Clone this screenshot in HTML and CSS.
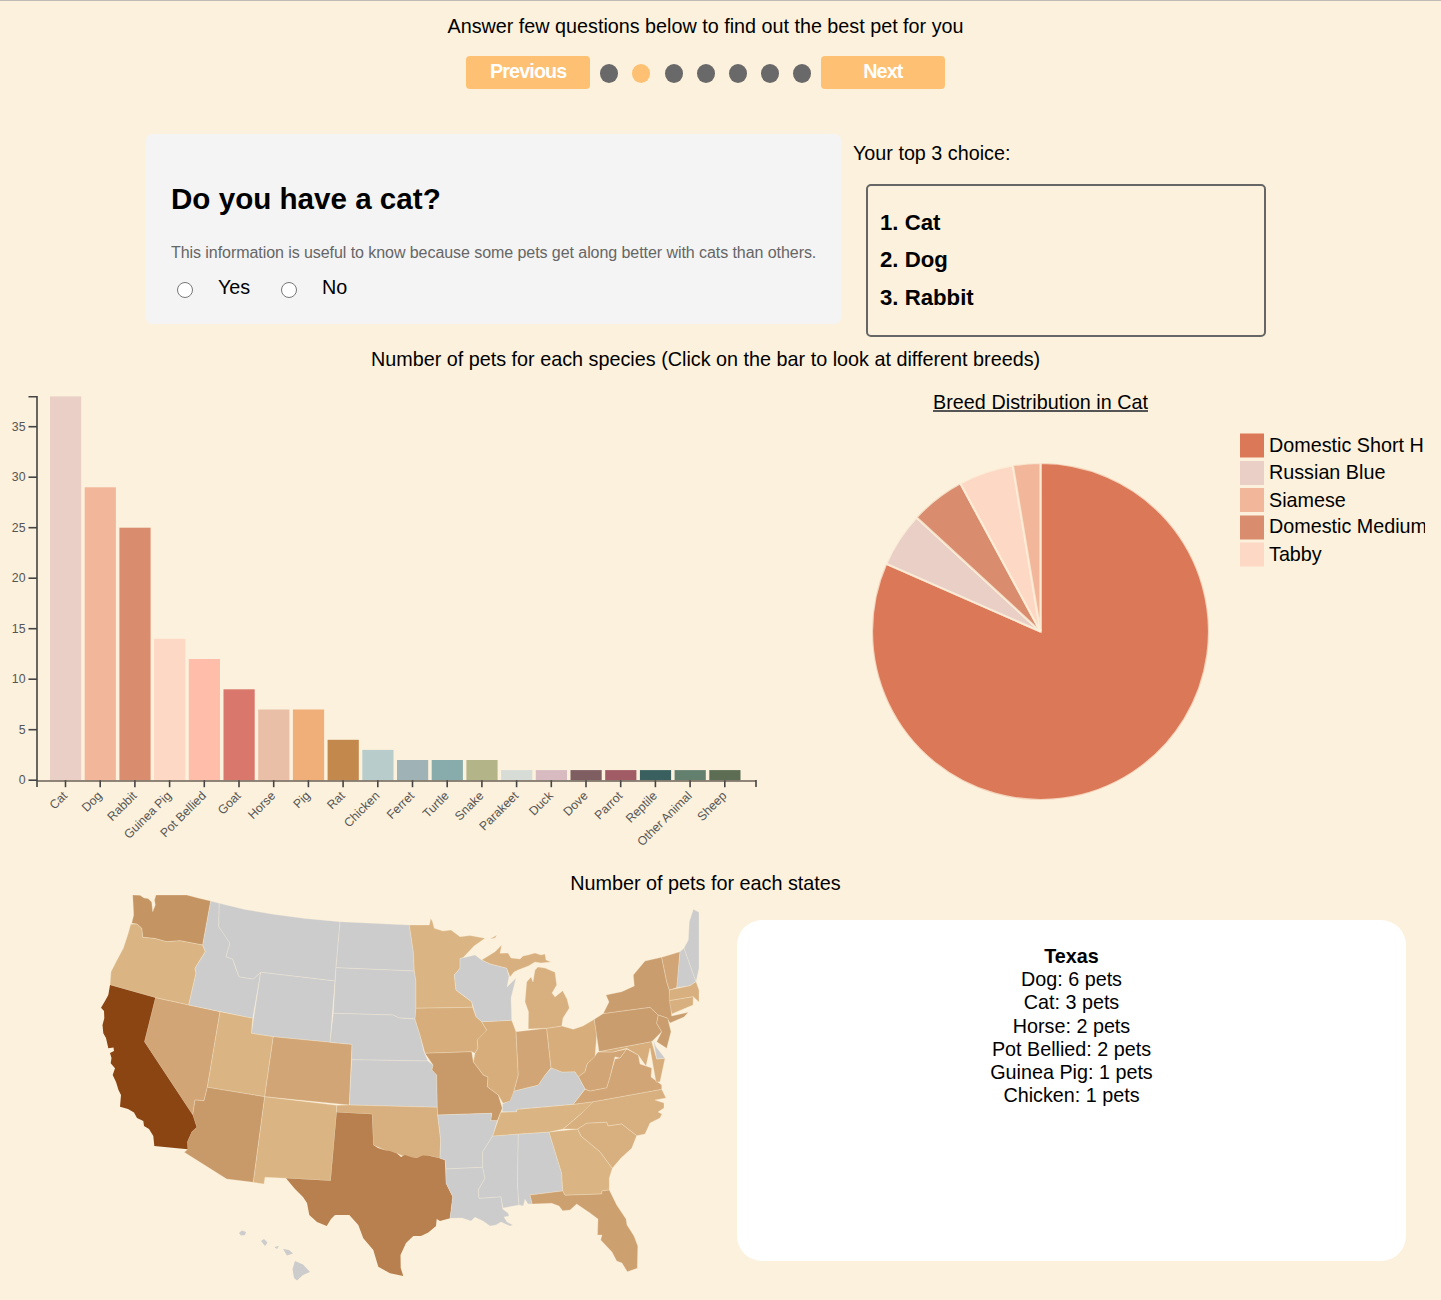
FILE: index.html
```
<!DOCTYPE html>
<html lang="en">
<head>
<meta charset="utf-8">
<title>Find the best pet for you</title>
<link rel="stylesheet" href="styles.css">
</head>
<body>
<main class="page">
  <p class="intro">Answer few questions below to find out the best pet for you</p>
  <nav class="pager">
    <button class="pager-btn" type="button">Previous</button>
    <ol class="dots"><li></li><li class="active"></li><li></li><li></li><li></li><li></li><li></li></ol>
    <button class="pager-btn" type="button">Next</button>
  </nav>

  <section class="quiz">
    <form class="question">
      <h1>Do you have a cat?</h1>
      <p class="hint">This information is useful to know because some pets get along better with cats than others.</p>
      <div class="answers">
        <label><input type="radio" name="cat">Yes</label>
        <label><input type="radio" name="cat">No</label>
      </div>
    </form>
    <aside class="result">
      <p>Your top 3 choice:</p>
      <div class="ranking"><div>1. Cat</div><div>2. Dog</div><div>3. Rabbit</div></div>
    </aside>
  </section>

  <h2 class="section-title">Number of pets for each species (Click on the bar to look at different breeds)</h2>
  <section class="charts">
    <svg class="bar-chart" id="bars" viewBox="0 380 800 480"></svg>
    <svg class="pie-chart" viewBox="840 380 585 440">
      <text class="pie-title" x="933" y="409" textLength="215">Breed Distribution in Cat</text>
      <rect x="933" y="410" width="215" height="2" fill="#555"/>
      <g class="slices">
        <path fill="#db7857" d="M1040.5 631.500V463A168.5 168.5 0 1 1 886.2 563.8Z"/>
        <path fill="#e9cfc5" d="M1040.5 631.500L886.2 563.8A168.5 168.5 0 0 1 916.5 517.4Z"/>
        <path fill="#d98d6e" d="M1040.5 631.500L916.5 517.4A168.5 168.5 0 0 1 960.3 483.3Z"/>
        <path fill="#fdd8c4" d="M1040.5 631.500L960.3 483.3A168.5 168.5 0 0 1 1012.8 465.3Z"/>
        <path fill="#f2b79b" d="M1040.5 631.500L1012.8 465.3A168.5 168.5 0 0 1 1040.5 463Z"/>
      </g>
      <g class="legend">
        <rect x="1240" y="433.500" width="24" height="24" fill="#db7857"/><text x="1269" y="452">Domestic Short H</text>
        <rect x="1240" y="461" width="24" height="24" fill="#e9cfc5"/><text x="1269" y="478.500">Russian Blue</text>
        <rect x="1240" y="488" width="24" height="24" fill="#f2b79b"/><text x="1269" y="506.500">Siamese</text>
        <rect x="1240" y="515.5" width="24" height="24" fill="#d98d6e"/><text x="1269" y="533">Domestic Medium</text>
        <rect x="1240" y="542.500" width="24" height="24" fill="#fdd8c4"/><text x="1269" y="561">Tabby</text>
      </g>
    </svg>
  </section>

  <h2 class="section-title">Number of pets for each states</h2>
  <section class="states">
    <svg class="map" viewBox="0 895 699 390">
      <path class="s9" d="M132.7 895L140 895.3 144 898 148 898.500 151.700 902 152.700 911.700 155.300 905 154.500 900 156 895 186.700 895 198 898 210.700 901 202.700 945 192 943 180 940.700 166.700 941.700 155 938.500 142.700 937.300 141.700 928.300 137 924 131.700 923.300 133.700 915Z"/>
      <path class="s1" d="M130.700 924.300L137 924 141.700 928.300 142.700 937.300 155 938.500 166.700 941.700 180 940.700 192 943 202.700 945 205.300 951.700 200 960 195 968.300 196 973.300 188.700 1005 155.300 997.700 110 985 111 971.700 117 960 123.300 948.300 128 934Z"/>
      <path class="s5" d="M155.300 997.700L144.300 1041.700 192.700 1115 195 1100 204 1100.700 207.300 1087.300 220 1011.700 188.700 1005Z"/>
      <path class="s0" d="M210.700 901L219.300 903.300 218.700 926.700 224 934 230 943.300 226 956.700 232.700 959 236 969 239 976.700 253.300 979 260.700 972.300 252.700 1018.300 188.700 1005 196 973.300 195 968.300 205.300 951.700 202.700 945Z"/>
      <path class="s0" d="M219.300 903.300L245 909.500 273.300 914.300 305 918.500 340 921.700 336 967.700 335 981 260.700 972.300 253.300 979 239 976.700 232.700 959 226 956.700 230 943.300 218.700 926.700Z"/>
      <path class="s0" d="M260.700 972.300L335 981 330 1042.300 273.300 1036.700 251.300 1033.300Z"/>
      <path class="s1" d="M220 1011.700L252.700 1018.300 251.300 1033.300 273.300 1036.700 264.700 1096.700 207.300 1087.300Z"/>
      <path class="s5" d="M273.300 1036.700L330 1042.300 352 1044.300 349.300 1105 264.700 1096.700Z"/>
      <path class="s8" d="M207.300 1087.300L264.700 1096.700 253.300 1182.300 226.700 1179 184.300 1152.300 187.700 1149.300 187.300 1141.700 191.700 1131.700 196.700 1127.300 192.700 1115 195 1100 204 1100.700Z"/>
      <path class="s12" d="M110 985L108.300 995 105 1001 101 1007.700 104 1011 104.300 1018.300 102.500 1025 103.300 1033.300 106 1038 108.300 1048.300 113.500 1047.500 114 1051 110 1053 111.500 1058 110.700 1063.300 115 1068.300 112.700 1075 116 1082 118.500 1090 121 1095 120 1106.700 128 1109 134 1112.500 137 1118 143.300 1121 144 1126 149 1129 153.300 1136 154.300 1146 187.700 1149.300 187.300 1141.700 191.700 1131.700 196.700 1127.300 192.700 1115 144.300 1041.700 155.300 997.700Z"/>
      <path class="s1" d="M264.700 1096.700L336.700 1105.300 336.700 1112.300 330.700 1180.700 286 1178.300 265 1177.300 264 1184 253.300 1182.300Z"/>
      <path class="s0" d="M340 921.700L409.300 925 413.300 951.700 414.300 971 336 967.700Z"/>
      <path class="s0" d="M336 967.700L414.300 971 416 981.700 416 1008.300 415 1019 406.700 1018.300 399 1018 393.300 1015 333.300 1013.300Z"/>
      <path class="s0" d="M333.300 1013.300L393.300 1015 399 1018 415 1019 420 1035 424 1051.700 428 1061 351.700 1059.700 352 1044.300 330 1042.300Z"/>
      <path class="s0" d="M351.700 1059.700L428 1061 433 1065 432 1070 436.700 1075 437.300 1107.300 349.300 1105Z"/>
      <path class="s2" d="M336.700 1105.300L349.300 1105 437.300 1107.300 437.700 1115 440.700 1140 440 1158.300 430 1156 416.700 1158 405 1157 396.700 1153.300 384 1150 373.300 1145 372 1114.300 336.700 1112.300Z"/>
      <path class="s11" d="M336.700 1112.300L372 1114.300 373.300 1145 378 1148 384 1150 390 1151 396.700 1153.300 401 1157 405 1155 411 1157 416.700 1158 423 1155.500 430 1156 440 1158.300 445 1160 446 1183.300 452.700 1196.700 450 1218.300 440 1221 436.700 1219 436 1226 428.300 1232.500 421 1236 413.300 1236 406 1243 400.500 1255 400.700 1268 403.300 1276 390 1273.300 378.300 1266.700 373.300 1250 363.300 1238.300 358.300 1225 349.300 1215 335 1215 331 1219 326.700 1226 317 1222 309.300 1215 307 1203 303 1197 295 1189 286 1178.300 330.700 1180.700Z"/>
      <path class="s1" d="M409.300 925L429.300 925 430.700 918.500 432.300 921 434.300 928.300 443 931 451 930 460 936.700 470 935.500 485 938.300 474 946 463 957.700 460 958.500 460 968.300 454.300 975 456 990 465 997 471.700 1001.700 472.700 1007.300 416 1008.300 416 981.700 414.300 971 413.300 951.700Z"/>
      <path class="s3" d="M416 1008.300L472.700 1007.300 476 1016.700 481.700 1021.700 486.700 1030 484 1036 477.300 1040 478 1048 475 1053.300 471.700 1051.700 425 1053.300 420 1035 415 1019Z"/>
      <path class="s8" d="M425 1053.300L471.700 1051.700 473.300 1061.700 483.300 1075 488 1077 487.300 1086.700 498.300 1095 502.300 1108.300 497.300 1120.700 490.700 1120.700 491.700 1113.300 437.700 1115 437.300 1107.300 436.700 1075 432 1070 433 1065Z"/>
      <path class="s0" d="M437.700 1115L491.700 1113.300 490.700 1120.700 497.300 1120.700 492.700 1136 482.700 1151.700 482.700 1167.300 446 1169 445 1160 440 1158.300 440.700 1140Z"/>
      <path class="s0" d="M446 1169L482.700 1167.300 485 1178.300 478.300 1190 479 1198.300 501 1196.700 502.700 1209 508.300 1213.300 509 1216 504 1217 507 1222 512.700 1225 510 1226 501 1222 496 1225 490 1226 483 1221 475 1217.300 471 1221 462 1218 450 1218.300 452.700 1196.700 446 1183.300Z"/>
      <path class="s0" d="M492.700 1136L518.300 1134 517.500 1185 519 1205 503 1208 501 1196.700 479 1198.300 478.300 1190 485 1178.300 482.700 1167.300 482.700 1151.700Z"/>
      <path class="s0" d="M518.300 1134L549 1132 561.700 1173.300 562.700 1191 530 1195 532.300 1204 528 1204 525 1199.300 523.300 1206 519 1205 517.500 1185Z"/>
      <path class="s1" d="M549 1132L577.700 1129 581 1136 600 1151.700 612.300 1168.300 609.300 1178 609.300 1190 602 1191 601.700 1194 565 1195.300 562.700 1191 561.700 1173.300Z"/>
      <path class="s6" d="M530 1195L562.700 1191 565 1195.300 601.700 1194 602 1191 609.300 1190 616.700 1205 626 1219 627 1225 634 1236 637.800 1246 637.300 1268.300 627.300 1271.700 622 1263 616.700 1261 612 1252 600.700 1240 602 1235 597.500 1235 598 1219 590 1213 576.700 1204 570 1210 562.700 1210.700 559 1206 551.700 1203.300 532.300 1204Z"/>
      <path class="s1" d="M492.700 1136L500.700 1112.300 516.700 1111.700 516.700 1109.300 573.300 1104.300 593.300 1101.700 591 1107 581.700 1113.300 563.300 1129 549 1132 518.300 1134Z"/>
      <path class="s2" d="M593.300 1101.700L661.700 1089.300 666 1098 655 1100 664 1103 664 1108 658 1112 662 1114 660 1118 650 1123 645 1134 636.700 1135.700 621.700 1124 608 1126 606.700 1122.300 586.700 1123.300 577.700 1129 563.300 1129 581.700 1113.300Z"/>
      <path class="s2" d="M577.700 1129L586.700 1123.300 606.700 1122.300 608 1126 621.700 1124 636.700 1135.700 631.700 1148.300 621 1158 612.300 1168.300 600 1151.700 581 1136Z"/>
      <path class="s5" d="M573.300 1104.300L585 1089.300 590 1091 606.700 1087.700 610 1076.700 615 1059 620 1058 626.700 1049 638.300 1055 640 1064 651.700 1068 651 1077 661.700 1085 661.700 1089.300 593.300 1101.700Z"/>
      <path class="s5" d="M598 1052L613 1052 626.700 1049 620 1058 615 1056.700 610 1076.700 606.700 1087.700 590 1091 585 1089 578.300 1076.700 585 1071.700 587 1064 594.300 1056.700Z"/>
      <path class="s0" d="M502.300 1111.700L502.500 1104 508 1101 514 1091 525 1088.300 538.300 1085 545 1075 551.700 1067.700 562 1072 575 1071.700 578.300 1076.700 585 1089 573.300 1104.300 516.700 1109.300 516.700 1111.700Z"/>
      <path class="s3" d="M481.700 1021.700L511.700 1020.300 516 1031.700 518.300 1075 514 1091 510 1101 503 1103.300 498.300 1095 487.300 1086.700 488 1077 483.300 1075 473.300 1061.700 475 1053.300 478 1048 477.300 1040 486.700 1030Z"/>
      <path class="s5" d="M516 1031.700L546.700 1028.300 551 1067.700 545 1075 538.300 1085 525 1088.300 514 1091 518.300 1075Z"/>
      <path class="s3" d="M546.700 1028.300L561.700 1026 573.300 1029.300 583 1026 594.300 1019.300 596.700 1035 595 1056.700 587 1064 585 1071.700 578.300 1076.700 575 1071.700 562 1072 551 1067.700Z"/>
      <path class="s2" d="M528.300 1029L528.500 1011.700 525 1001.700 526.700 982 531 977 533 982 535 970 538 967 545 968 555 972.300 556.700 985 552 993 555 997 562.700 990.700 567 999 569.300 1008 563 1018 561.700 1026 546.700 1028.300Z"/>
      <path class="s2" d="M481.700 960L495 951.700 501.700 945 500 953.300 508 953 511 958 520 959 523 956 528 955 535 953 541 955 545 954 546 960 551 962 541 963 535 962 528.300 966 518 970 514 972 510 977 506.700 968.300 490 964Z"/>
      <path class="s2" d="M490 939L497 935 495 938Z"/>
      <path class="s0" d="M460 958.500L475 955 481.700 960 490 964 506.700 968.300 509 976.700 507 987 516 978 511 998 511.700 1020.300 481.700 1021.700 476 1016.700 471.700 1001.700 456 990 454.300 975 460 968.300Z"/>
      <path class="s7" d="M594.300 1019.300L603.300 1013.500 650 1007.300 658.300 1015 656.700 1023.300 661.700 1031.700 651.700 1041.700 599 1051.700Z"/>
      <path class="s7" d="M603.300 1013.500L609 1002 606 995 621.700 991.700 634.300 986 633.300 975 645 961 661.700 957.300 666.700 981.700 669.300 990 671.700 1016 688.300 1012.300 684 1017 670 1023 667 1018 658.300 1015 650 1007.300Z"/>
      <path class="s7" d="M658.300 1015L667.700 1018.300 671 1031.700 666.700 1048.300 656.700 1041.700 661.700 1031.700 656.700 1023.300Z"/>
      <path class="s3" d="M599 1051.700L651.700 1041.700 656.700 1059 665 1058.300 660 1081.700 656 1082 653 1065 650 1048 646 1066 638.300 1055 626.700 1048.300 613 1052Z"/>
      <path class="s0" d="M653.300 1040L656 1046.700 665 1058.300 656.700 1059Z"/>
      <path class="s5" d="M661.700 957.300L680 951.700 677.300 985 676.700 987.700 669.300 990 666.700 981.700Z"/>
      <path class="s0" d="M680 951.700L684 948 696 981.700 690 985.700 676.700 987.700Z"/>
      <path class="s0" d="M684 948L688.300 940 689.300 921.700 693.300 909.300 699 912.300 699 968.300 696 981.700Z"/>
      <path class="s2" d="M669.300 990L690 985.700 696 981.700 699 990 699 1002 693.300 996.700 669.300 1000.700Z"/>
      <path class="s2" d="M669.300 1000.700L693.300 996.700 693 1005 671.700 1014Z"/>
      <g class="islands"><path d="M239 1233L242 1230.500 246 1232 245 1235 241 1235.500Z"/><path d="M261 1241L264 1239 267.500 1242.500 265 1246Z"/><path d="M274.500 1247L279 1246 277 1249Z"/><path d="M283 1249L289 1250 293 1253.500 287 1255.500Z"/><path d="M295 1261L303 1264.500 310 1272 303 1275 297 1280.500 294 1278 292.500 1269Z"/></g>
    </svg>
    <div class="state-card">
      <strong>Texas</strong><span>Dog: 6 pets</span><span>Cat: 3 pets</span><span>Horse: 2 pets</span><span>Pot Bellied: 2 pets</span><span>Guinea Pig: 1 pets</span><span>Chicken: 1 pets</span>
    </div>
  </section>
</main>
<script src="chart.js"></script>
</body>
</html>
```
FILE: styles.css
```
* { box-sizing: border-box; }
body {
  margin: 0;
  height: 1300px;
  overflow: hidden;
  border-top: 1px solid #bfbcb6;
  background: #fcf1dc;
  color: #000;
  font: 19.75px/23.2px "Liberation Sans", Arial, sans-serif;
}
.page { width: 1411px; display: flex; flex-direction: column; }
p, h1, h2, ol { margin: 0; padding: 0; }
.intro { padding-top: 14px; text-align: center; height: 55px; }
.pager { display: flex; justify-content: center; align-items: center; height: 33px; }
.pager-btn {
  width: 124px; height: 33px; padding: 0 0 2px; border: 0; border-radius: 4px;
  background: #fec072; color: #fff;
  font: bold 19.75px/31px "Liberation Sans", Arial, sans-serif;
  letter-spacing: -0.9px;
}
.dots { display: flex; gap: 14.2px; list-style: none; padding: 2px 9.5px 0 10px; }
.dots li { width: 18px; height: 18.5px; border-radius: 50%; background: #696969; }
.dots .active { background: #fec072; }
.quiz { display: flex; margin-top: 45px; padding-left: 146px; height: 204px; }
.question { width: 695px; height: 190px; padding: 48px 25px 0; border-radius: 6px; background: #f4f4f4; }
.question h1 { font-size: 29.6px; line-height: 34px; }
.hint { margin-top: 26px; font-size: 16.05px; line-height: 20px; letter-spacing: -0.077px; color: #666; white-space: nowrap; }
.answers { display: flex; margin-top: 14px; }
.answers label { display: flex; width: 104px; align-items: center; }
.answers input { width: 16px; height: 16px; margin: 4px 25px 0 6px; }
.result { padding: 8px 0 0 12px; }
.ranking {
  display: flex; flex-direction: column; gap: 14px;
  width: 400px; height: 153px; margin: 19px 0 0 13px; padding: 25px 12px;
  border: 2px solid #666; border-radius: 5px;
  font-size: 22.2px; font-weight: bold;
}
.section-title { height: 32px; padding-top: 10px; text-align: center; font-size: 19.8px; line-height: 23.2px; font-weight: normal; }
.charts { display: flex; gap: 40px; margin-top: 10px; height: 482px; }
.charts svg { flex: none; }
.bar-chart { width: 800px; height: 480px; }
.bar-chart text { font-size: 12.3px; fill: #555; }
.bar-chart .axis { fill: none; stroke: #444; stroke-width: 1.6; }
.bar-chart .base { fill: none; stroke: #554b42; stroke-opacity: .65; stroke-width: 2; }
.pie-chart { width: 585px; height: 440px; overflow: hidden; }
.slices path { stroke: #fcf1dc; stroke-width: 2.2; stroke-opacity: .75; }
.states { display: flex; margin-top: 1px; height: 390px; }
.map { flex: none; width: 699px; height: 390px; }
.map path { stroke: #fcf1dc; stroke-width: 1; stroke-opacity: .28; stroke-linejoin: round; }
.map .s11, .map .s12, .map .islands path { stroke: none; }
.s0, .islands { fill: #ccc; }
.s1 { fill: #dab583; }
.s2 { fill: #d8b07f; }
.s3 { fill: #d6ad7b; }
.s5 { fill: #d1a575; }
.s6 { fill: #cda070; }
.s7 { fill: #c99d6d; }
.s8 { fill: #c89a69; }
.s9 { fill: #c49462; }
.s11 { fill: #b7804e; }
.s12 { fill: #8b4513; }
.state-card {
  flex: none; display: flex; flex-direction: column; align-items: center;
  width: 669px; height: 341px; margin: 25px 0 0 38px; padding-top: 25px;
  border-radius: 25px; background: #fff;
}
```
FILE: chart.js
```
const data = [
  ["Cat", 38, "#e9cfc5"], ["Dog", 29, "#f2b79b"], ["Rabbit", 25, "#d98d6e"], ["Guinea Pig", 14, "#fdd8c4"],
  ["Pot Bellied", 12, "#ffbdaa"], ["Goat", 9, "#d9776c"], ["Horse", 7, "#e9bfa8"], ["Pig", 7, "#f0ae79"],
  ["Rat", 4, "#c3884b"], ["Chicken", 3, "#b8cdcb"], ["Ferret", 2, "#9fb2b5"], ["Turtle", 2, "#88abab"],
  ["Snake", 2, "#b3b588"], ["Parakeet", 1, "#d8dcd7"], ["Duck", 1, "#d8bbc0"], ["Dove", 1, "#7f5e62"],
  ["Parrot", 1, "#a05b65"], ["Reptile", 1, "#39605e"], ["Other Animal", 1, "#63806f"], ["Sheep", 1, "#5c6d53"]
];
const base = 780.2, unit = 10.1, pitch = 34.7;
let out = "";
data.forEach(([name, count, color], i) => {
  const x = 50 + i * pitch, cx = x + 15.5;
  out += `<rect x="${x}" y="${base - count * unit}" width="31.2" height="${count * unit}" fill="${color}"/>`;
  out += `<path class="axis" d="M${cx} ${base}v7"/>`;
  out += `<text text-anchor="end" transform="translate(${cx + 2.5} 796.5) rotate(-45)">${name}</text>`;
});
out += `<path class="base" d="M37 781H756"/><path class="axis" d="M28.5 396.7H37V787M756 780V787"/>`;
for (let v = 0; v <= 35; v += 5) {
  const y = base - v * unit;
  out += `<path class="axis" d="M28.5 ${y}H37"/><text text-anchor="end" x="25.5" y="${y + 4.2}">${v}</text>`;
}
document.getElementById("bars").innerHTML = out;
```
